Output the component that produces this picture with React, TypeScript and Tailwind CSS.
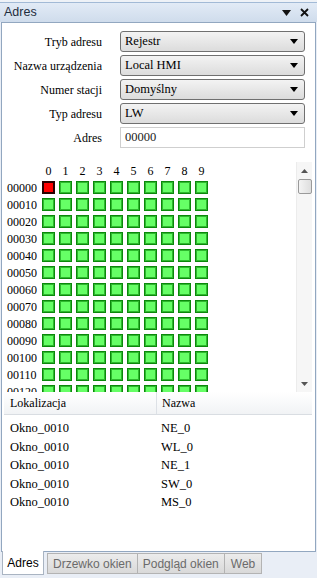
import React from "react";

const fields = [
  { label: "Tryb adresu", value: "Rejestr" },
  { label: "Nazwa urządzenia", value: "Local HMI" },
  { label: "Numer stacji", value: "Domyślny" },
  { label: "Typ adresu", value: "LW" },
];

const rows = ["00000", "00010", "00020", "00030", "00040", "00050", "00060", "00070", "00080", "00090", "00100", "00110", "00120"];
const cols = [0, 1, 2, 3, 4, 5, 6, 7, 8, 9];

const refs = [
  ["Okno_0010", "NE_0"],
  ["Okno_0010", "WL_0"],
  ["Okno_0010", "NE_1"],
  ["Okno_0010", "SW_0"],
  ["Okno_0010", "MS_0"],
];

const Arrow = () => (
  <svg width="8" height="5" viewBox="0 0 8 5" className="shrink-0">
    <path d="M0 0h8L4 5z" fill="#000" />
  </svg>
);

const App = () => {
  return (
    <div className="w-[317px] h-[578px] bg-[#e9eef6] flex flex-col overflow-hidden font-['Liberation_Serif',serif] text-black">
      <div className="h-[2px] bg-[#eef2f7]" />
      {/* title bar */}
      <div className="h-[20px] border-t border-[#a2bad6] bg-gradient-to-b from-[#e2ebf6] to-[#cfdcec] flex items-center pl-[4px] pr-[8px]">
        <span className="font-['Liberation_Sans',sans-serif] text-[12.5px] text-[#1f2d3d]">Adres</span>
        <div className="ml-auto flex items-center gap-[9px]">
          <svg width="9" height="6" viewBox="0 0 9 6">
            <path d="M0 0h9L4.5 6z" fill="#111" />
          </svg>
          <svg width="9" height="9" viewBox="0 0 9 9">
            <path d="M1 1l7 7M8 1L1 8" stroke="#111" strokeWidth="1.8" />
          </svg>
        </div>
      </div>

      {/* panel */}
      <div className="ml-px w-[315px] h-[530px] border border-[#92a7c0] bg-white flex flex-col">
        <div className="pt-[8px] flex flex-col gap-[3px]">
          {fields.map((f) => (
            <div key={f.label} className="flex items-center h-[21px]">
              <div className="w-[100px] text-right text-[12px] leading-none">{f.label}</div>
              <div className="ml-[18px] w-[185px] h-[21px] rounded-[3px] border border-[#707070] bg-gradient-to-b from-[#f3f3f3] to-[#dcdcdc] flex items-center pl-[4px] pr-[6px]">
                <span className="text-[12.5px] leading-none">{f.value}</span>
                <span className="ml-auto">
                  <Arrow />
                </span>
              </div>
            </div>
          ))}
          <div className="flex items-center h-[21px]">
            <div className="w-[100px] text-right text-[12px] leading-none">Adres</div>
            <div className="ml-[18px] w-[185px] h-[21px] border border-[#cfcfcf] flex items-center pl-[4px]">
              <span className="text-[12.5px] leading-none text-[#222]">00000</span>
            </div>
          </div>
        </div>

        {/* bit grid */}
        <div className="mt-[14px] h-[230px] flex pr-[3px]">
          <div className="flex-1 overflow-hidden">
            <div className="flex h-[17px] items-center pl-[40px] gap-[4px]">
              {cols.map((c) => (
                <div key={c} className="w-[13px] text-center text-[12px] leading-none text-black">
                  {c}
                </div>
              ))}
            </div>
            {rows.map((r, ri) => (
              <div key={r} className="flex h-[17px] items-center pl-[5px]">
                <div className="w-[35px] text-[12px] leading-none text-[#000]">{r}</div>
                <div className="flex gap-[4px]">
                  {cols.map((c) => (
                    <div
                      key={c}
                      className={
                        ri === 0 && c === 0
                          ? "w-[13px] h-[13px] bg-[#ff0000] border-2 border-[#2a0000]"
                          : "w-[13px] h-[13px] bg-[#66ff66] border border-[#0a8a0a] shadow-[inset_0_0_0_1px_#2fb82f]"
                      }
                    />
                  ))}
                </div>
              </div>
            ))}
          </div>
          <div className="w-[16px] bg-[#f6f6f6] border-l border-[#ececec] flex flex-col items-center">
            <div className="h-[17px] flex items-center justify-center">
              <svg width="7" height="4" viewBox="0 0 7 4">
                <path d="M0 4h7L3.5 0z" fill="#555" />
              </svg>
            </div>
            <div className="w-[14px] h-[15px] rounded-[2px] border border-[#9a9a9a] bg-gradient-to-r from-[#f4f4f4] to-[#dedede]" />
            <div className="mt-auto h-[17px] flex items-center justify-center">
              <svg width="7" height="4" viewBox="0 0 7 4">
                <path d="M0 0h7L3.5 4z" fill="#555" />
              </svg>
            </div>
          </div>
        </div>

        {/* references table */}
        <div className="mx-[2px] mr-[3px] h-[23px] flex items-center bg-gradient-to-b from-[#ffffff] to-[#f1f3f5] border-b border-[#d9dde2] text-[12px] leading-none">
          <div className="w-[153px] h-full flex items-center pl-[6px] border-r border-[#dde1e6]">Lokalizacja</div>
          <div className="pl-[5px]">Nazwa</div>
        </div>
        <div className="pt-[4px]">
          {refs.map(([a, b], i) => (
            <div key={i} className="h-[18.5px] flex items-center text-[12.5px] leading-none">
              <div className="w-[159px] pl-[8px]">{a}</div>
              <div>{b}</div>
            </div>
          ))}
        </div>
      </div>

      {/* tabs */}
      <div className="flex items-start pl-[2px] font-['Liberation_Sans',sans-serif] text-[12px] leading-none">
        <div className="h-[24px] -mt-px w-[42px] bg-white border-x border-b border-[#a9b4c2] flex items-center justify-center text-black">
          Adres
        </div>
        <div className="mt-[1px] h-[21px] ml-[3px] px-[5px] bg-gradient-to-b from-[#ececec] to-[#d9d9d9] border border-[#b3b3b3] flex items-center text-[#6b6b6b]">
          Drzewko okien
        </div>
        <div className="mt-[1px] h-[21px] px-[5px] bg-gradient-to-b from-[#ececec] to-[#d9d9d9] border border-l-0 border-[#b3b3b3] flex items-center text-[#6b6b6b]">
          Podgląd okien
        </div>
        <div className="mt-[1px] h-[21px] px-[6px] bg-gradient-to-b from-[#ececec] to-[#d9d9d9] border border-l-0 border-[#b3b3b3] flex items-center text-[#6b6b6b]">
          Web
        </div>
      </div>
    </div>
  );
};

export default App;
